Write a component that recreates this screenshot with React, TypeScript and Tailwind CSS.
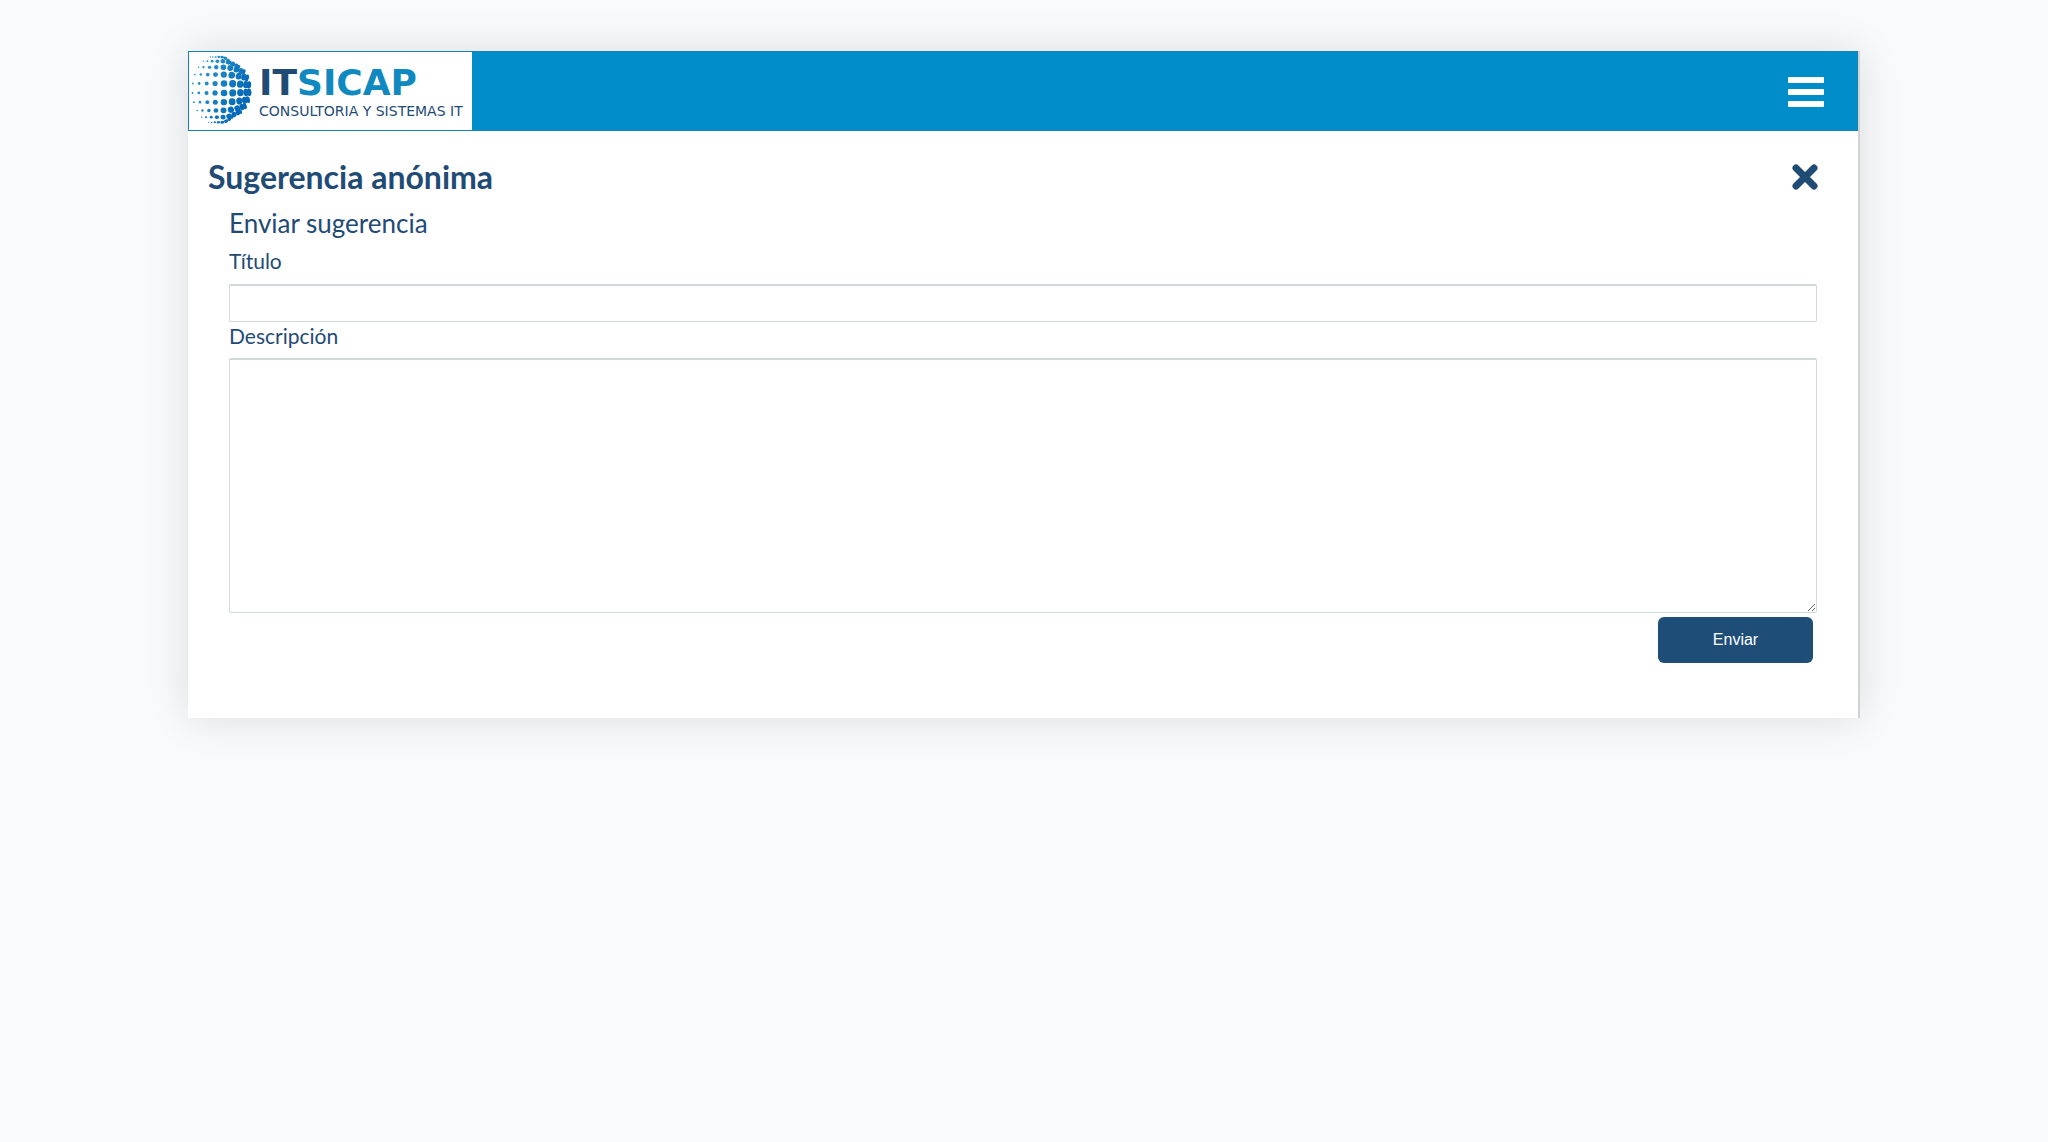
const LATITUDES = [-76, -58, -42, -27, -11, 5, 21, 37, 53, 72];
const LONGITUDES = [-80, -50, -30, -12, 6, 24, 42, 60, 78];

function Globe() {
  const dots = LATITUDES.flatMap((lat) =>
    LONGITUDES.map((lon) => {
      const phi = (lat * Math.PI) / 180;
      const lambda = (lon * Math.PI) / 180;
      const side = Math.sin(lambda);
      const bend = 1 - 0.22 * Math.max(0, side) ** 2;
      const size = Math.min(3.7, 3.1 + side * 2.2);
      const squash = side > 0 ? 0.5 + 0.5 * Math.cos(lambda) : 1;
      return {
        key: `${lat}/${lon}`,
        x: 30 + 29 * Math.cos(phi * 0.9) * side,
        y: 37 + 34 * Math.sin(phi) * bend,
        rx: Math.max(0.6, size * squash * Math.cos(phi * 0.75)),
        ry: Math.max(0.7, size * (0.25 + 0.75 * Math.cos(phi))),
        tilt: side > 0 ? -lat * side * 0.6 : 0,
      };
    }),
  );

  return (
    <svg viewBox="0 0 62 76" className="h-[76px] w-[62px] shrink-0" aria-hidden="true">
      <defs>
        <linearGradient id="globe" gradientUnits="userSpaceOnUse" x1="0" y1="0" x2="60" y2="30">
          <stop offset="0" stopColor="#35a3cf" />
          <stop offset="1" stopColor="#0569b8" />
        </linearGradient>
      </defs>
      <g fill="url(#globe)">
        {dots.map((d) => (
          <path
            key={d.key}
            transform={`rotate(${d.tilt} ${d.x} ${d.y})`}
            d={`M${d.x - d.rx} ${d.y}a${d.rx} ${d.ry} 0 1 0 ${2 * d.rx} 0a${d.rx} ${d.ry} 0 1 0 ${-2 * d.rx} 0z`}
          />
        ))}
      </g>
    </svg>
  );
}

function Logo() {
  return (
    <a href="#" className="flex h-full w-[283px] items-center gap-1.5 overflow-hidden bg-white pl-0.5">
      <Globe />
      <span className="whitespace-nowrap font-['DejaVu_Sans',sans-serif]">
        <span className="block text-[36px] leading-10 font-bold text-[#0f89bf]">
          <span className="text-[#1f4b75]">IT</span>SICAP
        </span>
        <span className="block text-[14px] leading-4 text-[#1f4b75]">
          CONSULTORIA Y SISTEMAS IT
        </span>
      </span>
    </a>
  );
}

function Header() {
  return (
    <header className="flex h-20 items-center justify-between border border-[#1683b3] bg-[#008dc9]">
      <Logo />
      <button type="button" aria-label="Menú" className="mt-0.5 mr-[33px]">
        <svg viewBox="0 0 36 30" className="h-[30px] w-9 fill-white">
          <rect width="36" height="6" rx="1" />
          <rect y="12" width="36" height="6" rx="1" />
          <rect y="24" width="36" height="6" rx="1" />
        </svg>
      </button>
    </header>
  );
}

export default function App() {
  return (
    <div className="min-h-screen bg-[#f9fafc] px-47 pt-[51px] pb-12">
      <main className="border-r-2 border-[#d0d3d6] bg-white pb-[55px] font-['Lato','Open_Sans',sans-serif] text-[#1f4b75] shadow-[0_0_40px_rgba(0,0,0,0.12)]">
        <Header />
        <div className="flex items-center justify-between pt-6 pr-10 pl-5">
          <h1 className="text-[32px] leading-11 font-bold">Sugerencia anónima</h1>
          <button type="button" aria-label="Cerrar">
            <svg viewBox="0 0 26 26" className="h-[26px] w-[26px]">
              <path d="M4 4l18 18M22 4L4 22" stroke="#1f4b75" strokeWidth="7" strokeLinecap="round" />
            </svg>
          </button>
        </div>
        <form className="flex flex-col px-[41px]">
          <h2 className="text-[26px] leading-12">Enviar sugerencia</h2>
          <label htmlFor="titulo" className="pb-[9px] text-[21px] leading-7">
            Título
          </label>
          <input
            id="titulo"
            type="text"
            className="h-[38px] rounded-xs border border-t-2 border-[#d0d8d9] bg-white px-3 text-base outline-none"
          />
          <label htmlFor="descripcion" className="pb-2 text-[21px] leading-7">
            Descripción
          </label>
          <textarea
            id="descripcion"
            className="h-[255px] resize rounded-xs border border-t-2 border-[#d0d8d9] bg-white px-3 py-2 text-base outline-none"
          />
          <button
            type="submit"
            className="mt-1 mr-1 h-[46px] w-[155px] self-end rounded-md bg-[#1e4e78] font-['Liberation_Sans',sans-serif] text-base text-white"
          >
            Enviar
          </button>
        </form>
      </main>
    </div>
  );
}
